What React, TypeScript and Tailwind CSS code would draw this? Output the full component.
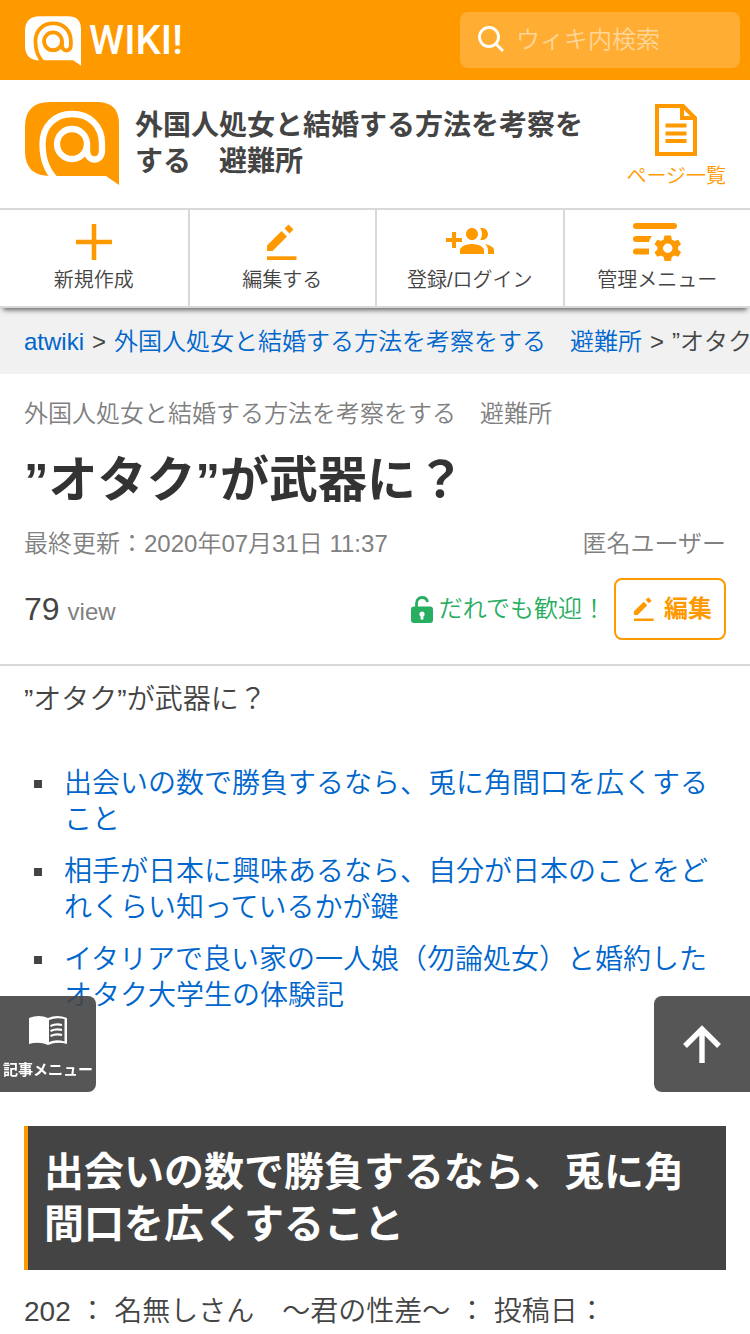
import type { ReactNode } from "react";

type NavItem = {
  label: string;
  icon: ReactNode;
};

type IconProps = {
  className?: string;
};

function BubbleLogo({ className, swirl }: IconProps & { swirl: string }) {
  return (
    <svg viewBox="0 0 94 83" className={className} fill="none" aria-hidden="true">
      <path d="M25 0H72Q94 0 94 22V83L81 74H25Q0 74 0 49V25Q0 0 25 0Z" fill="currentColor" />
      <g stroke={swirl} strokeWidth="6.3">
        <circle cx="47" cy="42" r="15" />
        <path d="M31 78C21 68 17.500 55 17.500 42C17.500 24 30 12 47 12C65 12 77 24 77 42V48C77 54 74 57.500 69.500 57.500C65 57.500 62 54 62 48V41" />
      </g>
    </svg>
  );
}

function SearchIcon() {
  return (
    <svg viewBox="0 0 26 28" className="h-7 w-[26px] shrink-0" fill="none" stroke="white" strokeWidth="2.800" aria-hidden="true">
      <circle cx="11" cy="11" r="9.500" />
      <path d="M17.500 17.500L25 25" />
    </svg>
  );
}

function PageIcon() {
  return (
    <svg viewBox="0 0 42 52" className="h-[52px] w-[42px]" fill="none" stroke="currentColor" strokeWidth="4" aria-hidden="true">
      <path d="M2 2H28L40 14V50H2Z" />
      <path d="M27 2V14H40" />
      <path d="M10.500 21.500H31.500M10.500 29.500H31.500M10.500 37H31.500" />
    </svg>
  );
}

function PlusIcon() {
  return (
    <svg viewBox="0 0 36 36" className="h-9 w-9" stroke="currentColor" strokeWidth="4.600" aria-hidden="true">
      <path d="M18 0V36M0 18H36" />
    </svg>
  );
}

function PencilIcon({ className }: IconProps) {
  return (
    <svg viewBox="0 0 30 36" className={className} fill="currentColor" aria-hidden="true">
      <path d="M0 21.500L14.500 7L20 12.500L5.500 27H0Z" />
      <path d="M17.500 4.500L21.500 0.500L26.500 5.500L22.500 9.500Z" />
      <path d="M0 32.300H29.500V36H0Z" />
    </svg>
  );
}

function GroupAddIcon() {
  return (
    <svg viewBox="0 0 24 24" className="h-12 w-12" fill="currentColor" aria-hidden="true">
      <path d="M8 10H5V7H3v3H0v2h3v3h2v-3h3v-2zm10 1c1.660 0 2.990-1.340 2.990-3S19.660 5 18 5c-.32 0-.63.05-.91.14.57.81.9 1.790.9 2.860s-.34 2.040-.9 2.860c.28.09.59.14.91.14zm-5 0c1.660 0 2.990-1.340 2.990-3S14.660 5 13 5c-1.660 0-3 1.340-3 3s1.340 3 3 3zm6.620 2.160c.83.73 1.380 1.660 1.380 2.840v2h3v-2c0-1.540-2.370-2.490-4.380-2.840zM13 13c-2 0-6 1-6 3v2h12v-2c0-2-4-3-6-3z" />
    </svg>
  );
}

function AdminIcon() {
  return (
    <svg viewBox="0 0 48 38" className="h-[38px] w-12" fill="currentColor" aria-hidden="true">
      <rect x="0" y="0" width="44" height="6" rx="3" />
      <path d="M3 13H19Q17 15 16 19H3Q0 19 0 16Q0 13 3 13Z" />
      <path d="M3 25.500H16V31.500H3Q0 31.500 0 28.500Q0 25.500 3 25.500Z" />
      <path
        fillRule="evenodd"
        d="M31.500 12.500H38L38.800 16.500L41.500 18L45.300 16.700L48 21.300L45 24V26.500L48 29.200L45.300 33.800L41.500 32.500L38.800 34L38 38H31.500L30.700 34L28 32.500L24.200 33.800L21.500 29.200L24.500 26.500V24L21.500 21.300L24.200 16.700L28 18L30.700 16.500ZM34.750 20.500A4.750 4.750 0 1 0 34.750 30A4.750 4.750 0 1 0 34.750 20.500Z"
      />
    </svg>
  );
}

function UnlockIcon() {
  return (
    <svg viewBox="0 0 22 27" className="h-[27px] w-[22px]" aria-hidden="true">
      <path d="M5.500 12V7.500C5.500 3.500 8 1.500 11 1.500C14 1.500 16 3 16.500 6" fill="none" stroke="currentColor" strokeWidth="2.800" />
      <rect y="10.500" width="22" height="16.500" rx="3" fill="currentColor" />
      <path d="M11 15.500A2.800 2.800 0 0 1 12.300 20.700L12.500 23.500H9.500L9.700 20.700A2.800 2.800 0 0 1 11 15.500Z" fill="white" />
    </svg>
  );
}

function BookIcon() {
  return (
    <svg viewBox="0 0 38 30" className="h-[30px] w-[38px]" aria-hidden="true">
      <path d="M0 2Q10-2 19 2Q28-2 38 2V28Q28 25 19 29Q10 25 0 28Z" fill="white" />
      <path d="M20 4Q27 1 35.500 3V25.500Q27 23 20 26Z" fill="#555" />
      <path d="M21.500 10Q27 7.500 33 9M21.500 15Q27 12.500 33 14M21.500 20Q27 17.500 33 19" fill="none" stroke="white" strokeWidth="2.200" />
    </svg>
  );
}

function ArrowUpIcon() {
  return (
    <svg viewBox="0 0 38 38" className="h-[38px] w-[38px]" fill="none" stroke="white" strokeWidth="5.400" aria-hidden="true">
      <path d="M19 38V4M2 21L19 4L36 21" />
    </svg>
  );
}

const navItems: NavItem[] = [
  { label: "新規作成", icon: <PlusIcon /> },
  { label: "編集する", icon: <PencilIcon className="h-9 w-[30px]" /> },
  { label: "登録/ログイン", icon: <GroupAddIcon /> },
  { label: "管理メニュー", icon: <AdminIcon /> },
];

const contents = [
  "出会いの数で勝負するなら、兎に角間口を広くすること",
  "相手が日本に興味あるなら、自分が日本のことをどれくらい知っているかが鍵",
  "イタリアで良い家の一人娘（勿論処女）と婚約したオタク大学生の体験記",
];

export default function App() {
  return (
    <div
      lang="ja"
      className="min-h-screen bg-white font-['Liberation_Sans','Noto_Sans_CJK_JP',sans-serif] font-[350] text-[#444]"
    >
      <header className="flex h-20 items-center justify-between bg-[#ff9900] pr-2.5 pl-[25px]">
        <a href="#top" className="flex items-center gap-2 pt-0.5 text-white">
          <BubbleLogo className="h-[50px] w-14" swirl="#ff9900" />
          <span className="font-[Roboto,sans-serif] text-[40px] leading-none font-medium">WIKI!</span>
        </a>
        <label className="flex h-14 w-[280px] items-center gap-3 rounded-lg bg-[#ffad33] px-[18px]">
          <SearchIcon />
          <input
            type="search"
            aria-label="ウィキ内検索"
            placeholder="ウィキ内検索"
            className="w-full min-w-0 bg-transparent text-2xl text-white outline-none placeholder:text-[#ffd699]"
          />
        </label>
      </header>

      <div className="flex h-[130px] items-start border-b-2 border-[#d9d9d9] pt-[22px] pr-6 pl-[25px]">
        <a href="#home" className="flex min-w-0 flex-1 gap-4">
          <BubbleLogo className="h-[83px] w-[94px] shrink-0 text-[#ff9900]" swirl="white" />
          <span className="max-w-[460px] pt-1.5 text-[28px] leading-9 font-bold">
            外国人処女と結婚する方法を考察をする　避難所
          </span>
        </a>
        <a href="#list" className="flex shrink-0 flex-col items-center gap-1 pt-0.5 text-xl leading-8 text-[#ff9900]">
          <PageIcon />
          ページ一覧
        </a>
      </div>

      <nav className="relative grid h-[98px] grid-cols-4 border-b-2 border-[#d9d9d9] bg-white shadow-[0_5px_5px_-3px_rgba(0,0,0,0.6)]">
        {navItems.map((item) => (
          <a
            key={item.label}
            href="#nav"
            className="flex flex-col items-center border-l-2 border-[#d9d9d9] pt-3 text-xl leading-7 first:border-l-0"
          >
            <span className="flex h-10 items-center justify-center text-[#ff9900]">{item.icon}</span>
            <span className="mt-1">{item.label}</span>
          </a>
        ))}
      </nav>

      <div className="flex h-[66px] items-center gap-2 overflow-hidden bg-[#f1f1f1] pt-0.5 pl-6 text-2xl whitespace-nowrap">
        <a href="#atwiki" className="text-[#0066cc]">atwiki</a>
        <span>&gt;</span>
        <a href="#home" className="text-[#0066cc]">外国人処女と結婚する方法を考察をする　避難所</a>
        <span>&gt;</span>
        <span>”オタク”が武器に？</span>
      </div>

      <section className="border-b-2 border-[#d9d9d9] px-6 pt-[22px] pb-6">
        <p className="text-2xl leading-9 text-[#808080]">外国人処女と結婚する方法を考察をする　避難所</p>
        <h1 className="mt-3 text-[49px] leading-[72px] font-bold text-[#333]">”オタク”が武器に？</h1>
        <div className="mt-2.5 flex justify-between text-2xl leading-9 text-[#808080]">
          <span>最終更新：2020年07月31日 11:37</span>
          <span>匿名ユーザー</span>
        </div>
        <div className="mt-4 flex items-center">
          <p className="flex flex-1 items-baseline gap-2 text-2xl text-[#808080]">
            <span className="text-[32px] text-[#444]">79</span>
            <span>view</span>
          </p>
          <span className="mr-2 flex items-center gap-1.5 text-2xl text-[#27ae60]">
            <UnlockIcon />
            だれでも歓迎！
          </span>
          <button
            type="button"
            className="flex h-[62px] w-28 items-center justify-center gap-2.5 rounded-lg border-2 border-[#ff9900] pl-1.5 text-2xl font-bold text-[#ff9900]"
          >
            <PencilIcon className="h-6 w-5" />
            編集
          </button>
        </div>
      </section>

      <main className="px-6 pt-4 text-[28px] leading-9">
        <p>”オタク”が武器に？</p>
        <ul className="mt-12 flex flex-col gap-4">
          {contents.map((item) => (
            <li key={item} className="flex">
              <span className="mt-3.5 mr-[22px] ml-2.5 h-2 w-2 shrink-0 bg-[#444]" />
              <a href="#section" className="text-[#0066cc]">{item}</a>
            </li>
          ))}
        </ul>
        <h2 className="mt-28 border-l-4 border-[#ff9900] bg-[#444] px-4 py-5 text-[40px] leading-[52px] font-bold text-white">
          出会いの数で勝負するなら、兎に角間口を広くすること
        </h2>
        <p className="mt-6">202 ： 名無しさん　～君の性差～ ： 投稿日：</p>
      </main>

      <button
        type="button"
        className="fixed bottom-[242px] left-0 flex h-24 w-24 flex-col items-center gap-3 rounded-r-lg bg-[#444]/90 pt-5 text-[15px] leading-6 font-bold whitespace-nowrap text-white"
      >
        <BookIcon />
        記事メニュー
      </button>
      <button
        type="button"
        aria-label="ページの先頭へ"
        className="fixed right-0 bottom-[242px] flex h-24 w-24 items-center justify-center rounded-l-lg bg-[#444]/90"
      >
        <ArrowUpIcon />
      </button>
    </div>
  );
}
